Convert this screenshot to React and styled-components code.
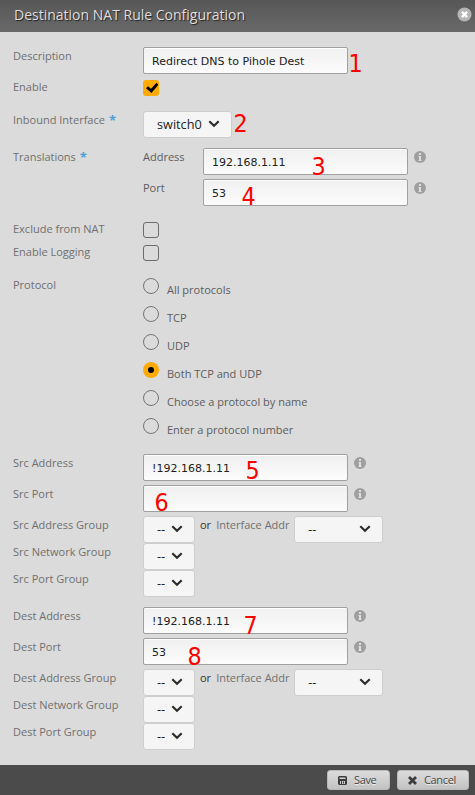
import React from "react";
import styled, { createGlobalStyle } from "styled-components";

const Global = createGlobalStyle`
  * { box-sizing: border-box; }
  body { margin: 0; background: #dbdbdb; }
`;

const Dialog = styled.div`
  position: relative;
  width: 475px;
  height: 795px;
  display: flex;
  flex-direction: column;
  background: #dbdbdb;
  font: 11px/18px "Open Sans", "Noto Sans", sans-serif;
  color: #707070;
  overflow: hidden;
`;

const Header = styled.header`
  height: 32px;
  flex: none;
  display: flex;
  align-items: flex-start;
  justify-content: space-between;
  padding: 4px 3px 0 14px;
  background: linear-gradient(#575757, #696969);
`;

const Title = styled.h1`
  margin: 0;
  font-size: 14px;
  font-weight: 400;
  line-height: 22px;
  color: #dedede;
  text-shadow: 1px 1px 1px #222;
  white-space: nowrap;
`;

const CloseButton = styled.button`
  width: 15px;
  height: 15px;
  margin-top: 3px;
  padding: 0;
  border: 0;
  background: none;
  svg { display: block; }
`;

const Form = styled.main`
  flex: 1;
  padding: 15px 13px 0;
`;

const Row = styled.div`
  display: flex;
  align-items: flex-start;
  height: ${(p) => p.$h}px;
`;

const Label = styled.div`
  width: 130px;
  flex: none;
  white-space: nowrap;
`;

const Star = styled.span`
  display: inline-block;
  color: #4a9fd8;
  font-weight: 700;
  font-size: 13px;
  line-height: 1;
  margin-left: 4px;
  transform: translateY(1px);
`;

const Sublabel = styled.div`
  width: 60px;
  flex: none;
  color: #5d5d5d;
`;

const Field = styled.input`
  width: 205px;
  height: 27px;
  flex: none;
  padding: 2px 8px 0;
  border: 1px solid #a0a0a0;
  border-radius: 2px;
  background: linear-gradient(#f0f0f0, #fcfcfc);
  box-shadow: inset 0 1px 0 #fff;
  font: 11px "DejaVu Sans", sans-serif;
  color: #222;
  outline: none;
`;

const InfoSlot = styled.span`
  display: flex;
  margin: 3px 0 0 6px;
`;

const Check = styled.span`
  display: flex;
  align-items: center;
  justify-content: center;
  width: 16px;
  height: 16px;
  margin-top: 2px;
  border: ${(p) => (p.$on ? "0" : "1px solid #6c6c6c")};
  border-radius: 3px;
  background: ${(p) => (p.$on ? "#ffab00" : "transparent")};
`;

const SelectBox = styled.div`
  display: flex;
  align-items: center;
  justify-content: space-between;
  flex: none;
  width: ${(p) => p.$w}px;
  height: 27px;
  padding: 0 11px 1px 13px;
  border: 1px solid #cecece;
  border-radius: 3px;
  background: #f5f5f5;
  font-size: 12.7px;
  color: #222;
`;

const Or = styled.span`
  margin-left: 5px;
  color: #333;
`;

const InterfaceLabel = styled.span`
  width: 78px;
  margin-left: 5px;
  white-space: nowrap;
`;

const RadioList = styled.div`
  display: flex;
  flex-direction: column;
`;

const Option = styled.label`
  display: flex;
  height: 28px;
  padding-top: 2px;
  color: #5d5d5d;
`;

const OptionText = styled.span`
  margin: 3px 0 0 8px;
`;

const Radio = styled.span`
  display: flex;
  align-items: center;
  justify-content: center;
  width: 16px;
  height: 16px;
  border-radius: 50%;
  border: ${(p) => (p.$on ? "0" : "1px solid #757575")};
  background: ${(p) => (p.$on ? "#ffab00" : "transparent")};
  &::after {
    content: "";
    display: ${(p) => (p.$on ? "block" : "none")};
    width: 6px;
    height: 6px;
    border-radius: 50%;
    background: #000;
  }
`;

const Footer = styled.footer`
  height: 30px;
  flex: none;
  display: flex;
  justify-content: flex-end;
  gap: 7px;
  padding: 5px 6px 5px;
  background: #4b4b4b;
`;

const Button = styled.button`
  display: flex;
  align-items: center;
  width: ${(p) => p.$w}px;
  height: 20px;
  padding: 0 0 0 10px;
  border: 1px solid #b9b9b9;
  border-radius: 3px;
  background: linear-gradient(#dcdcdc, #c2c2c2);
  font: 11px/16px "Open Sans", sans-serif;
  letter-spacing: -0.35px;
  color: #444;
  text-shadow: 0 1px 0 #eee;
  svg { flex: none; margin: 1px 7px 0 0; }
`;

const Marker = styled.span`
  position: absolute;
  left: ${(p) => p.$x}px;
  top: ${(p) => p.$y}px;
  font: 24px/28px "DejaVu Sans", sans-serif;
  color: #f00;
  transform: scaleX(0.93);
  pointer-events: none;
`;

const Info = () => (
  <InfoSlot>
    <svg width="12" height="12" viewBox="0 0 12 12">
      <circle cx="6" cy="6" r="6" fill="#9f9f9f" />
      <path d="M5 2h2v2H5zM4.5 5H7v4h.5v1h-3V9H5V6h-.5z" fill="#dedede" />
    </svg>
  </InfoSlot>
);

const Select = ({ w, children }) => (
  <SelectBox $w={w}>
    <span>{children}</span>
    <svg width="12" height="8" viewBox="0 0 12 8">
      <path d="M1.3 1.3 6 5.7l4.7-4.4" fill="none" stroke="#2b2b2b" strokeWidth="2.2" />
    </svg>
  </SelectBox>
);

const protocols = [
  "All protocols",
  "TCP",
  "UDP",
  "Both TCP and UDP",
  "Choose a protocol by name",
  "Enter a protocol number",
];

const markers = [
  ["1", 348, 50], ["2", 233, 110], ["3", 311, 153], ["4", 241, 183],
  ["5", 245, 457], ["6", 154, 489], ["7", 243, 612], ["8", 187, 643],
];

const AddressRows = ({ prefix, address, port, last }) => (
  <>
    <Row $h={31}>
      <Label>{prefix} Address</Label>
      <Field defaultValue={address} />
      <Info />
    </Row>
    <Row $h={31}>
      <Label>{prefix} Port</Label>
      <Field defaultValue={port} />
      <Info />
    </Row>
    <Row $h={27}>
      <Label>{prefix} Address Group</Label>
      <Select w={52}>--</Select>
      <Or>or</Or>
      <InterfaceLabel>Interface Addr</InterfaceLabel>
      <Select w={89}>--</Select>
    </Row>
    <Row $h={27}>
      <Label>{prefix} Network Group</Label>
      <Select w={52}>--</Select>
    </Row>
    <Row $h={last}>
      <Label>{prefix} Port Group</Label>
      <Select w={52}>--</Select>
    </Row>
  </>
);

export default function App() {
  return (
    <Dialog>
      <Global />
      <Header>
        <Title>Destination NAT Rule Configuration</Title>
        <CloseButton aria-label="Close">
          <svg width="15" height="15" viewBox="0 0 15 15">
            <circle cx="7.5" cy="7.5" r="7" fill="#b5b5b5" />
            <path d="m4.9 4.9 5.2 5.2m0-5.2-5.2 5.2" stroke="#fff" strokeWidth="2.2" />
          </svg>
        </CloseButton>
      </Header>
      <Form>
        <Row $h={31}>
          <Label>Description</Label>
          <Field defaultValue="Redirect DNS to Pihole Dest" />
        </Row>
        <Row $h={33}>
          <Label>Enable</Label>
          <Check $on>
            <svg width="16" height="16" viewBox="0 0 16 16">
              <path d="M3 8.2 5 6.2l3 2.5L13.5 2.8 15 4.5v.8L8.500 13z" fill="#000" />
            </svg>
          </Check>
        </Row>
        <Row $h={37}>
          <Label>Inbound Interface<Star>*</Star></Label>
          <Select w={89}>switch0</Select>
        </Row>
        <Row $h={31}>
          <Label>Translations<Star>*</Star></Label>
          <Sublabel>Address</Sublabel>
          <Field defaultValue="192.168.1.11" />
          <Info />
        </Row>
        <Row $h={41}>
          <Label />
          <Sublabel>Port</Sublabel>
          <Field defaultValue="53" />
          <Info />
        </Row>
        <Row $h={23}>
          <Label>Exclude from NAT</Label>
          <Check />
        </Row>
        <Row $h={33}>
          <Label>Enable Logging</Label>
          <Check />
        </Row>
        <Row $h={178}>
          <Label>Protocol</Label>
          <RadioList>
            {protocols.map((name) => (
              <Option key={name}>
                <Radio $on={name === "Both TCP and UDP"} />
                <OptionText>{name}</OptionText>
              </Option>
            ))}
          </RadioList>
        </Row>
        <AddressRows prefix="Src" address="!192.168.1.11" port="" last={37} />
        <AddressRows prefix="Dest" address="!192.168.1.11" port="53" last={27} />
      </Form>
      <Footer>
        <Button $w={63}>
          <svg width="9" height="9" viewBox="0 0 9 9">
            <path fillRule="evenodd" d="M1 0h7l1 1v7L8 9H1L0 8V1zM1.5 1.5V3h6V1.5zM2 5v3h1V5zm2 0v3h3V5zm1 .5h1v2H5z" fill="#3c3c3c" />
          </svg>
          Save
        </Button>
        <Button $w={72}>
          <svg width="9" height="9" viewBox="0 0 9 9">
            <path d="m1 1 7 7m0-7L1 8" stroke="#3c3c3c" strokeWidth="2.8" />
          </svg>
          Cancel
        </Button>
      </Footer>
      {markers.map(([n, x, y]) => (
        <Marker key={n} $x={x} $y={y}>{n}</Marker>
      ))}
    </Dialog>
  );
}
